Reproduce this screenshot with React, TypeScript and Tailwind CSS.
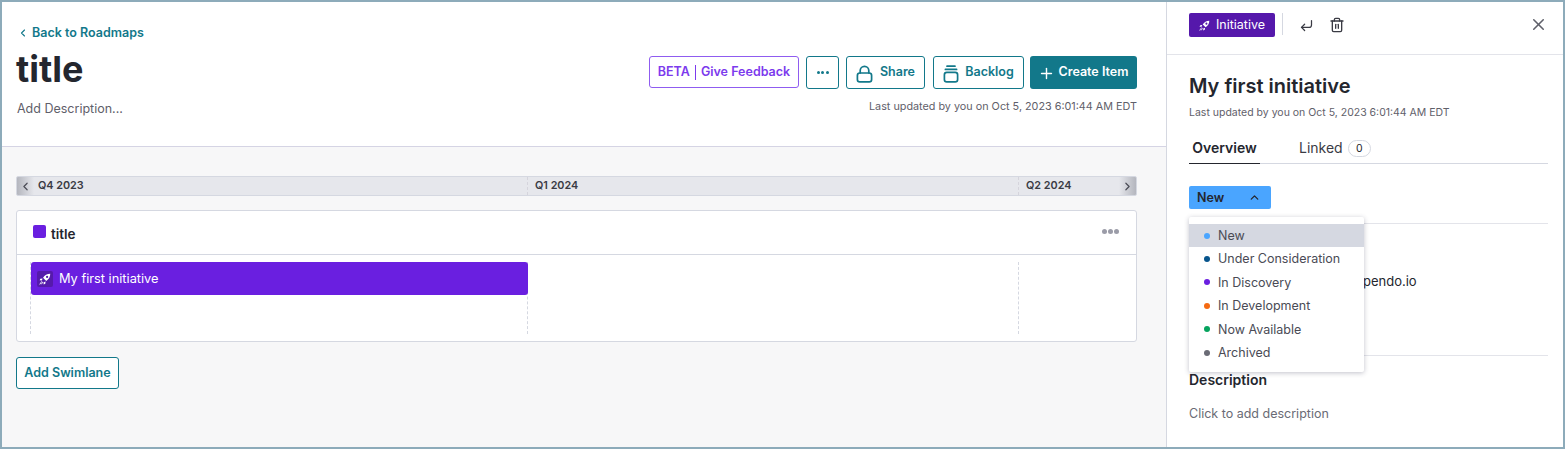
import { ChevronLeft, ChevronRight, ChevronUp, CornerDownLeft, Plus, Trash2, X } from "lucide-react";

const statuses = [
  { name: "New", dot: "bg-[#4aa5ff]", row: "bg-[#d5d8e1] h-[23px]" },
  { name: "Under Consideration", dot: "bg-[#07548c]", row: "h-[23.5px]" },
  { name: "In Discovery", dot: "bg-[#6a1fe0]", row: "h-[23.5px]" },
  { name: "In Development", dot: "bg-[#f56a12]", row: "h-[23.5px]" },
  { name: "Now Available", dot: "bg-[#06a35e]", row: "h-[23.5px]" },
  { name: "Archived", dot: "bg-[#6a6b75]", row: "h-[23.5px]" },
];

function Dots({ className }: { className: string }) {
  return (
    <span className={`flex items-center ${className}`}>
      <span className="size-full rounded-full bg-current" />
      <span className="size-full rounded-full bg-current" />
      <span className="size-full rounded-full bg-current" />
    </span>
  );
}

function BacklogIcon() {
  return (
    <svg width="16" height="18" viewBox="0 0 16 18" fill="none" stroke="currentColor" strokeWidth="1.7" strokeLinecap="round" className="mt-[3px] shrink-0">
      <path d="M4 1.2h8M2.4 4.4h11.2" />
      <rect x="1.4" y="7.4" width="13.2" height="9.4" rx="2.4" />
    </svg>
  );
}

function LockIcon() {
  return (
    <svg width="17" height="18" viewBox="0 0 17 18" fill="none" stroke="currentColor" strokeWidth="1.7" strokeLinecap="round" className="mt-[3px] shrink-0">
      <rect x="1.4" y="8" width="14.2" height="8.8" rx="2.4" />
      <path d="M4.2 8V5.6a4.3 4.3 0 0 1 8.6 0V8" />
    </svg>
  );
}

function RocketIcon({ size }: { size: number }) {
  return (
    <svg width={size} height={size} viewBox="0 0 16 16" fill="none" className="shrink-0">
      <path
        fill="#fff"
        fillRule="evenodd"
        d="M15 1C10.8 1 7.6 3 5.4 6.4l4.2 4.2C13 8.4 15 5.2 15 1ZM10.8 3.8a1.5 1.5 0 1 1 0 3 1.5 1.5 0 0 1 0-3Z"
      />
      <path fill="#fff" d="M4.8 7.2 1.8 7.6.8 9.8l3 .1ZM8.8 11.2l-.4 3-2.2 1-.1-3Z" />
      <path stroke="#fff" strokeWidth="1.2" strokeLinecap="round" d="M3.6 11.4 1.2 14.8M4.8 12.6l-1.4 2" />
    </svg>
  );
}

export default function App() {
  return (
    <div className="flex h-[449px] w-[1565px] overflow-hidden border-2 border-[#8dabba] bg-white font-['Inter',sans-serif] text-[#24262e]">
      <main className="flex w-[1164px] shrink-0 flex-col bg-[#f7f7f8]">
        <header className="flex h-[145px] shrink-0 justify-between border-b border-[#d5d4e4] bg-white pl-[14px] pr-[29px]">
          <div className="pt-[22px]">
            <a className="flex h-[18px] items-center gap-[3px] pl-[1px] text-[12.5px] font-semibold text-[#12788a]">
              <ChevronLeft size={12} strokeWidth={2.2} />
              Back to Roadmaps
            </a>
            <h1 className="mt-[6px] h-[42px] text-[36px] font-bold leading-[42px] text-[#24262e]">title</h1>
            <p className="mt-[10px] pl-[1px] text-[12.5px] leading-[18px] text-[#5f606a]">Add Description...</p>
          </div>
          <div className="flex flex-col items-end pt-[54px]">
            <div className="flex h-[33px] items-start text-[12.5px] font-semibold text-[#12788a]">
              <button className="flex h-[32px] w-[150px] items-center justify-center rounded-[3px] border border-[#8f5cf0] pt-[1px] text-[#7c3aed]">
                BETA<span className="mx-[5px] h-[15px] w-px bg-[#7c3aed]" />Give Feedback
              </button>
              <button className="ml-[7px] flex h-[33px] w-[33px] items-center justify-center rounded-[3px] border border-[#12788a]">
                <Dots className="h-[3px] w-[12px] gap-[1.5px]" />
              </button>
              <button className="ml-[7px] flex h-[33px] w-[79px] items-center justify-center gap-[7px] rounded-[3px] border border-[#12788a]">
                <LockIcon />
                <span className="-mt-[1px]">Share</span>
              </button>
              <button className="ml-[8px] flex h-[33px] w-[91px] items-center justify-center gap-[6px] rounded-[3px] border border-[#12788a]">
                <BacklogIcon />
                <span className="-mt-[1px]">Backlog</span>
              </button>
              <button className="ml-[6px] flex h-[33px] w-[107px] items-center justify-center gap-[3px] rounded-[3px] bg-[#12788a] text-white">
                <Plus size={17} strokeWidth={2} className="mt-[2px]" />
                <span className="-mt-[1px]">Create Item</span>
              </button>
            </div>
            <p className="mt-[10px] text-[10.8px] leading-[16px] text-[#5f606a]">Last updated by you on Oct 5, 2023 6:01:44 AM EDT</p>
          </div>
        </header>

        <section className="flex-1 pl-[14px] pr-[29px] pt-[29px]">
          <div className="relative flex h-[20px] items-center overflow-hidden rounded-[2px] border border-[#d5d8e1] bg-[#e6e7ec] text-[10.8px] font-semibold text-[#3a3b44]">
            <div className="flex h-full w-[511px] items-center border-r border-dashed border-[#d5d4dc] pl-[21px]">Q4 2023</div>
            <div className="flex h-full w-[491px] items-center border-r border-dashed border-[#d5d4dc] pl-[7px]">Q1 2024</div>
            <div className="pl-[7px]">Q2 2024</div>
            <span className="absolute inset-y-0 left-0 flex w-[17px] items-center justify-center bg-gradient-to-r from-[#b4b6be] to-[#e6e7ec] text-[#4a4b55]">
              <ChevronLeft size={13} strokeWidth={2.2} />
            </span>
            <span className="absolute inset-y-0 right-0 flex w-[17px] items-center justify-center bg-gradient-to-l from-[#b4b6be] to-[#e6e7ec] text-[#4a4b55]">
              <ChevronRight size={13} strokeWidth={2.2} />
            </span>
          </div>

          <div className="mt-[14px] h-[132px] rounded-[3px] border border-[#d5d8e1] bg-white">
            <div className="flex h-[44px] items-center justify-between border-b border-[#d5d8e1] pl-[16px] pr-[17px]">
              <div className="flex items-center gap-[5px]">
                <span className="-mt-[2px] size-[13px] rounded-[2px] bg-[#6a1fe0]" />
                <span className="mt-[3px] text-[13.5px] font-semibold">title</span>
              </div>
              <Dots className="-mt-[2px] h-[5px] w-[17px] gap-[1px] text-[#9b9ca8]" />
            </div>
            <div className="relative h-[86px] pl-[14px] pt-[7px]">
              <span className="absolute left-[13px] top-[7px] h-[72px] border-l border-dashed border-[#d5d8e1]" />
              <span className="absolute left-[510px] top-[7px] h-[72px] border-l border-dashed border-[#d5d8e1]" />
              <span className="absolute left-[1001px] top-[7px] h-[72px] border-l border-dashed border-[#d5d8e1]" />
              <div className="relative flex h-[33px] w-[497px] items-center gap-[6px] rounded-[3px] bg-[#6a1fe0] pl-[6px] text-[12.8px] text-white">
                <span className="flex size-[16px] items-center justify-center rounded-[2px] bg-[#551aab]">
                  <RocketIcon size={12} />
                </span>
                My first initiative
              </div>
            </div>
          </div>

          <button className="mt-[15px] h-[32px] w-[103px] rounded-[3px] border border-[#12788a] bg-white text-[12.5px] font-semibold text-[#12788a]">
            Add Swimlane
          </button>
        </section>
      </main>

      <aside className="relative flex-1 border-l border-[#d5d8e1] bg-white">
        <div className="flex h-[53px] items-start border-b border-[#e3e4ea] pl-[22px] pr-[15px] pt-[11px]">
          <span className="flex h-[24px] w-[86px] items-center justify-center gap-[6px] rounded-[2px] bg-[#5518ab] text-[12.5px] text-white">
            <RocketIcon size={11} />
            Initiative
          </span>
          <span className="ml-[7px] h-[22px] w-px bg-[#d5d8e1]" />
          <CornerDownLeft size={15} strokeWidth={2} className="ml-[16px] mt-[5px] text-[#3a3b44]" />
          <Trash2 size={16} strokeWidth={2} className="ml-[15px] mt-[4px] text-[#3a3b44]" />
          <X size={19} strokeWidth={2} className="ml-auto mt-[2px] text-[#5f606a]" />
        </div>

        <div className="pl-[22px] pr-[15px]">
          <h2 className="mt-[18px] text-[20px] font-semibold leading-[26px]">My first initiative</h2>
          <p className="mt-[6px] text-[10.5px] leading-[16px] text-[#5f606a]">Last updated by you on Oct 5, 2023 6:01:44 AM EDT</p>
          <div className="mt-[10px] flex h-[33px] items-center border-b border-[#d5d8e1] text-[14px]">
            <span className="flex h-[33px] w-[71px] items-center justify-center border-b border-[#24262e] pt-[2px] font-semibold">Overview</span>
            <span className="ml-[39px] text-[#3a3b44]">Linked</span>
            <span className="ml-[5px] mt-[3px] flex h-[17px] w-[23px] items-center justify-center rounded-full border border-[#d5d8e1] text-[10.5px]">0</span>
          </div>
          <button className="mt-[22px] flex h-[23px] w-[82px] items-center justify-between rounded-[2px] bg-[#4aa5ff] pl-[8px] pr-[10px] text-[12.5px] font-semibold">
            <span className="mt-[1px]">New</span>
            <ChevronUp size={13} strokeWidth={2.4} />
          </button>
          <div className="mt-[14px] h-[133px] border-y border-[#e3e4ea]">
            <p className="ml-[174px] mt-[49px] text-[13px] leading-[16px] text-[#24262e]">pendo.io</p>
          </div>
          <h3 className="mt-[14px] text-[14px] font-semibold leading-[20px]">Description</h3>
          <p className="mt-[16px] text-[12.5px] leading-[16px] text-[#6a6b75]">Click to add description</p>
        </div>

        <div className="absolute left-[22px] top-[215px] w-[175px] rounded-[2px] bg-white py-[7px] shadow-[0_1px_5px_rgba(50,50,80,0.3)]">
          {statuses.map((s) => (
            <div key={s.name} className={`flex items-center pl-[15px] text-[12.5px] text-[#4a4b55] ${s.row}`}>
              <span className={`size-[6px] rounded-full ${s.dot}`} />
              <span className="ml-[8px] mt-[2px]">{s.name}</span>
            </div>
          ))}
        </div>
      </aside>
    </div>
  );
}
